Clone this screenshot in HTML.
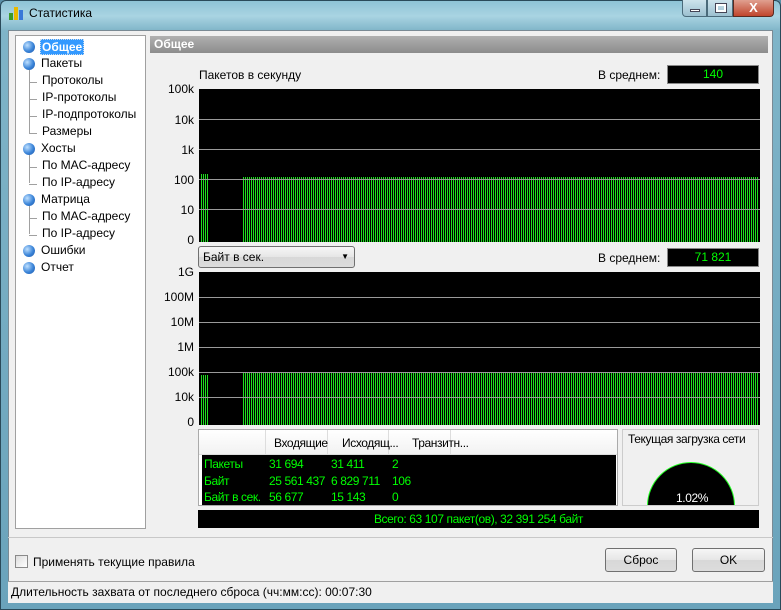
<!DOCTYPE html>
<html><head><meta charset="utf-8"><style>
*{margin:0;padding:0;box-sizing:border-box}
body{width:781px;height:610px;overflow:hidden;font-family:"Liberation Sans","DejaVu Sans",sans-serif;font-size:12px;color:#000;position:relative;background:#5a8fa8}
.abs{position:absolute}
#frame{left:0;top:0;width:781px;height:610px;background:linear-gradient(180deg,#8ec3d6 0,#a9d4e2 15px,#7fb4c8 30px,#6aa3bb 100%);border:1px solid #2a4a5a;border-radius:6px 6px 0 0}
#body{left:8px;top:30px;width:765px;height:573px;background:#f0f0f0;border:1px solid #7a8a94}
.tree{left:15px;top:35px;width:131px;height:494px;background:#fff;border:1px solid #a0a0a0}
.ti{position:absolute;font-size:12px;white-space:nowrap}
.dot{position:absolute;width:12px;height:12px;border-radius:50%;background:radial-gradient(circle at 35% 35%,#bfe0ff,#3a84d8 55%,#1d56a8)}
.ln{position:absolute;border-left:1px solid #a0a0a0}
.hl{position:absolute;border-top:1px solid #a0a0a0;width:8px}
.hdr{left:150px;top:36px;width:618px;height:17px;background:linear-gradient(#b0b0b0,#8c8c8c);color:#fff;font-weight:bold;font-size:12px;padding:1px 4px}
.lab{font-size:12px;white-space:nowrap}
.avg{background:#000;color:#0f0;text-align:center;font-size:12px;border:1px solid #888;line-height:17px}
.chart{background:#000}
.grid{position:absolute;left:0;width:100%;border-top:1px solid #9a9a9a;z-index:2}
.bars{position:absolute;bottom:0;background:repeating-linear-gradient(90deg,#1ee01e 0,#1ee01e 1px,#000 1px,#000 2px)}
.yl{position:absolute;width:40px;text-align:right;font-size:12px}
.btn{border:1px solid #707070;border-radius:3px;background:linear-gradient(#f6f6f6,#e6e6e6 50%,#d8d8d8 51%,#dcdcdc);text-align:center;line-height:22px}
.nar{font-size:12px;letter-spacing:-0.4px}
</style></head><body>
<div id="frame" class="abs"></div>
<div class="abs" style="left:9px;top:6px;width:16px;height:14px">
<div class="abs" style="left:0;top:7px;width:4px;height:7px;background:#3a9a2a"></div>
<div class="abs" style="left:5px;top:1px;width:4px;height:13px;background:#e8b800"></div>
<div class="abs" style="left:10px;top:4px;width:4px;height:10px;background:#3a78d8"></div>
</div>
<div class="abs" style="left:29px;top:6px;font-size:12px">Статистика</div>
<div class="abs" style="left:682px;top:0;width:25px;height:17px;border:1px solid #4a6a7a;border-top:0;border-radius:0 0 0 4px;background:linear-gradient(#cde3ec,#9cc0d0)"><div class="abs" style="left:7px;top:9px;width:10px;height:3px;background:#fff;border:1px solid #445"></div></div>
<div class="abs" style="left:707px;top:0;width:26px;height:17px;border:1px solid #4a6a7a;border-top:0;background:linear-gradient(#cde3ec,#9cc0d0)"><div class="abs" style="left:8px;top:4px;width:10px;height:8px;border:2px solid #fff;outline:1px solid #445"></div></div>
<div class="abs" style="left:733px;top:0;width:41px;height:17px;border:1px solid #5a2a20;border-top:0;border-radius:0 0 4px 0;background:linear-gradient(#e0a090,#c0452c);color:#fff;font-weight:bold;text-align:center;font-size:13px;line-height:15px">X</div>
<div id="body" class="abs"></div>
<div class="abs tree">
<div class="ln" style="left:13px;top:34px;height:64px"></div>
<div class="ln" style="left:13px;top:118px;height:29px"></div>
<div class="ln" style="left:13px;top:169px;height:29px"></div>
<div class="hl" style="left:13px;top:46px"></div><div class="hl" style="left:13px;top:63px"></div><div class="hl" style="left:13px;top:80px"></div><div class="hl" style="left:13px;top:97px"></div>
<div class="hl" style="left:13px;top:131px"></div><div class="hl" style="left:13px;top:148px"></div>
<div class="hl" style="left:13px;top:182px"></div><div class="hl" style="left:13px;top:199px"></div>
<div class="dot" style="left:7px;top:5px"></div>
<div class="ti" style="left:24px;top:3px;background:#3399ff;color:#fff;font-weight:bold;padding:0 1px;border:1px dotted #cde">Общее</div>
<div class="dot" style="left:7px;top:22px"></div><div class="ti" style="left:25px;top:20px">Пакеты</div>
<div class="ti" style="left:26px;top:37px">Протоколы</div>
<div class="ti" style="left:26px;top:54px">IP-протоколы</div>
<div class="ti" style="left:26px;top:71px">IP-подпротоколы</div>
<div class="ti" style="left:26px;top:88px">Размеры</div>
<div class="dot" style="left:7px;top:107px"></div><div class="ti" style="left:25px;top:105px">Хосты</div>
<div class="ti" style="left:26px;top:122px">По MAC-адресу</div>
<div class="ti" style="left:26px;top:139px">По IP-адресу</div>
<div class="dot" style="left:7px;top:158px"></div><div class="ti" style="left:25px;top:156px">Матрица</div>
<div class="ti" style="left:26px;top:173px">По MAC-адресу</div>
<div class="ti" style="left:26px;top:190px">По IP-адресу</div>
<div class="dot" style="left:7px;top:209px"></div><div class="ti" style="left:25px;top:207px">Ошибки</div>
<div class="dot" style="left:7px;top:226px"></div><div class="ti" style="left:25px;top:224px">Отчет</div>
</div>
<div class="abs hdr">Общее</div>
<div class="abs lab" style="left:199px;top:68px">Пакетов в секунду</div>
<div class="abs lab" style="left:598px;top:68px">В среднем:</div>
<div class="abs avg" style="left:667px;top:65px;width:92px;height:19px">140</div>
<div class="yl" style="left:154px;top:82px">100k</div>
<div class="yl" style="left:154px;top:113px">10k</div>
<div class="yl" style="left:154px;top:143px">1k</div>
<div class="yl" style="left:154px;top:173px">100</div>
<div class="yl" style="left:154px;top:203px">10</div>
<div class="yl" style="left:154px;top:233px">0</div>
<div class="abs chart" style="left:199px;top:89px;width:561px;height:153px">
<div class="grid" style="top:30px"></div><div class="grid" style="top:60px"></div><div class="grid" style="top:90px"></div><div class="grid" style="top:120px"></div>
<div class="bars" style="left:2px;width:7px;height:68px"></div>
<div class="bars" style="left:44px;width:515px;height:65px"></div>
</div>
<div class="abs btn" style="left:198px;top:246px;width:157px;height:22px;text-align:left;padding-left:4px;line-height:20px">Байт в сек.<span style="position:absolute;right:5px;top:0;font-size:8px">▼</span></div>
<div class="abs lab" style="left:598px;top:251px">В среднем:</div>
<div class="abs avg" style="left:667px;top:248px;width:92px;height:19px">71 821</div>
<div class="yl" style="left:154px;top:265px">1G</div>
<div class="yl" style="left:154px;top:290px">100M</div>
<div class="yl" style="left:154px;top:315px">10M</div>
<div class="yl" style="left:154px;top:340px">1M</div>
<div class="yl" style="left:154px;top:365px">100k</div>
<div class="yl" style="left:154px;top:390px">10k</div>
<div class="yl" style="left:154px;top:415px">0</div>
<div class="abs chart" style="left:199px;top:272px;width:561px;height:153px">
<div class="grid" style="top:25px"></div><div class="grid" style="top:50px"></div><div class="grid" style="top:75px"></div><div class="grid" style="top:100px"></div><div class="grid" style="top:125px"></div>
<div class="bars" style="left:2px;width:7px;height:50px"></div>
<div class="bars" style="left:44px;width:515px;height:52px"></div>
</div>
<div class="abs" style="left:198px;top:429px;width:420px;height:77px;background:#fff;border:1px solid #aaa">
<div class="abs" style="left:0;top:0;width:418px;height:25px;background:linear-gradient(#fff,#f2f2f2);border-bottom:1px solid #ddd"></div>
<div class="abs" style="left:66px;top:0;height:25px;border-left:1px solid #ddd"></div>
<div class="abs" style="left:128px;top:0;height:25px;border-left:1px solid #ddd"></div>
<div class="abs" style="left:189px;top:0;height:25px;border-left:1px solid #ddd"></div>
<div class="abs" style="left:251px;top:0;height:25px;border-left:1px solid #ddd"></div>
<div class="abs lab nar" style="left:75px;top:6px">Входящие</div>
<div class="abs lab nar" style="left:143px;top:6px">Исходящ...</div>
<div class="abs lab nar" style="left:213px;top:6px">Транзитн...</div>
<div class="abs nar" style="left:3px;top:25px;width:414px;height:50px;background:#000;color:#0f0;line-height:16.5px;padding-top:1px;white-space:nowrap">
<div class="abs" style="left:2px;top:1px">Пакеты<br>Байт<br>Байт в сек.</div>
<div class="abs" style="left:67px;top:1px">31 694<br>25 561 437<br>56 677</div>
<div class="abs" style="left:129px;top:1px">31 411<br>6 829 711<br>15 143</div>
<div class="abs" style="left:190px;top:1px">2<br>106<br>0</div>
</div></div>
<div class="abs" style="left:622px;top:429px;width:137px;height:77px;border:1px solid #ccc;background:#f0f0f0;overflow:hidden">
<div class="abs lab nar" style="left:5px;top:2px">Текущая загрузка сети</div>
<div class="abs" style="left:24px;top:32px;width:88px;height:88px;border-radius:50%;background:#000;border:1px solid #2f2"></div>
<div class="abs nar" style="left:53px;top:61px;color:#fff">1.02%</div>
</div>
<div class="abs nar" style="left:198px;top:510px;width:561px;height:18px;background:#000;color:#0f0;text-align:center;line-height:18px">Всего: 63 107 пакет(ов), 32 391 254 байт</div>
<div class="abs" style="left:8px;top:537px;width:765px;border-top:1px solid #c8c8c8"></div>
<div class="abs" style="left:15px;top:555px;width:13px;height:13px;border:1px solid #8a8a8a;background:linear-gradient(135deg,#ddd,#fff)"></div>
<div class="abs lab" style="left:33px;top:555px">Применять текущие правила</div>
<div class="abs btn" style="left:605px;top:548px;width:72px;height:24px">Сброс</div>
<div class="abs btn" style="left:692px;top:548px;width:73px;height:24px">OK</div>
<div class="abs" style="left:8px;top:581px;width:765px;height:22px;border-top:1px solid #a0a0a0;background:#f0f0f0"></div>
<div class="abs lab" style="left:11px;top:585px">Длительность захвата от последнего сброса (чч:мм:сс): 00:07:30</div>
</body></html>
